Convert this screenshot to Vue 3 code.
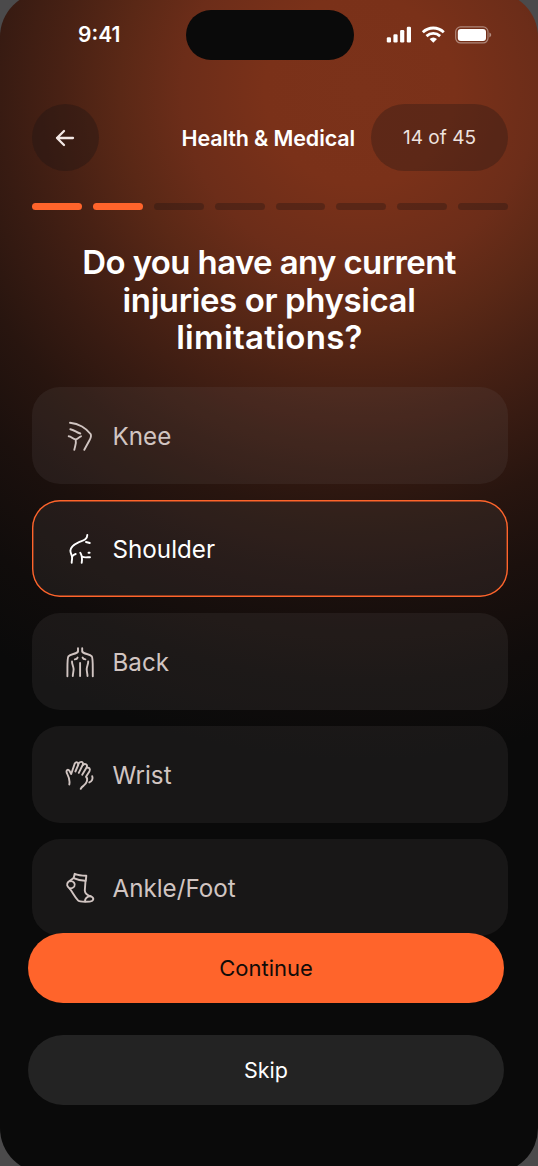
<script setup>
const steps = [true, true, false, false, false, false, false, false]

const options = [
  {
    label: 'Knee',
    icon: [
      'M6 3.8C11 4.3 15 5.8 18 7.5C21.5 9.5 24.5 12.3 26.6 15C27.6 17 26.8 19 25.5 21.3L20.3 30.8',
      'M6.3 10.2C10 10.7 12.5 13.5 16.3 14.5',
      'M4.7 17.2C7.5 17.2 8.5 20.2 11.7 20.4C14.5 20.5 14.3 18 17 17.3',
      'M11.7 20.8C12.6 24.5 10.8 27.5 10.3 30.8',
    ],
  },
  {
    label: 'Shoulder',
    selected: true,
    icon: [
      'M23.3 2.9C23.2 8 18.5 8.5 14.5 10.3C11 12 6.7 14.8 6.4 18.5C6.3 21 7.8 22.5 8.1 25C8.3 27.2 7.6 29 7.7 30.8',
      'M8 24.7C9 23 10.2 22.4 11.7 22',
      'M16.3 20.7C17.8 22.8 18.4 26 17.7 30.8',
      'M18 24.7C20.5 26 23.5 25.2 26 25.2',
      'M22 10L25.8 11',
      'M24.5 20.7H25.6',
    ],
  },
  {
    label: 'Back',
    icon: [
      'M14 3.2V6.5C12.7 9.5 6.7 8.5 4.4 11.3C3.2 13 3.5 17 3.4 31.2',
      'M18.2 3.2V6.5C19.5 9.5 25.5 8.5 27.8 11.3C29 13 28.7 17 28.8 31.2',
      'M8 16.5C7.8 19 9.6 21.5 9.6 24C9.6 27 8.8 28.5 8.8 31',
      'M24.2 16.5C24.4 19 22.7 21.5 22.7 24C22.7 27 23.5 28.5 23.5 31',
      'M10.8 14.4C12.4 14.3 13.2 13.7 13.6 12.6',
      'M21.4 14.4C19.8 14.3 19 13.7 18.6 12.6',
      'M16.1 18V31',
    ],
  },
  {
    label: 'Wrist',
    icon: [
      'M5.3 26.5C6.4 21.5 4.6 18.5 2.8 15C1.8 12.3 4.1 10.5 5.4 12.8L7.2 16L10.5 6.2C11.6 3.2 15 4 14.2 7L11.4 13.5',
      'M14.2 6.2C15.8 2.8 19.4 3.2 18.9 6.5L14.8 14.8',
      'M18.9 7C21 4.8 23.9 6.4 22.7 9.3L18.2 16.8',
      'M22.8 9.8C25.2 9 26.6 11 25.5 13.2L22 18.8C24.5 21 22.6 25.4 19.7 27.6C18.2 28.6 17.2 29.5 16.7 30.8',
      'M28.2 18.2C29.2 20.8 28 23.4 25.3 24.4',
    ],
  },
  {
    label: 'Ankle/Foot',
    icon: [
      'M10.7 2.8C14.5 4.4 18.5 4.7 22.3 4.8L21.8 9.7C17.5 9.8 13.5 9 9.6 7.2Z',
      'M8.9 7.5L4.2 11C2 13.3 3.3 15.6 5.3 17.2C8.5 20.8 10.5 26 14 29.4C15.6 31.2 21 30.9 25.8 30.6C30 30 30.3 27 27.3 25.5C23.5 24.5 21 22.8 20.8 19.5L21.5 10',
      'M6 10.2C9.3 9.5 12 13 10.3 15.5C9.2 17 7.4 17.5 5.8 17.5',
      'M21 30.3C20.8 27.4 23.3 25.4 26.5 25.3',
    ],
  },
]
</script>

<template>
  <div class="device">
    <div class="backdrop"></div>
    <main class="screen">
      <header class="status">
        <span class="time">9:41</span>
        <span class="island"></span>
        <svg class="signals" width="106" height="20" viewBox="0 0 106 20">
          <g fill="#fff">
            <rect x="0.8" y="12.2" width="4.2" height="5.3" rx="1.2" />
            <rect x="7.4" y="9.2" width="4.2" height="8.3" rx="1.2" />
            <rect x="14.1" y="5" width="4.2" height="12.5" rx="1.2" />
            <rect x="20.8" y="1.8" width="4.2" height="15.7" rx="1.2" />
          </g>
          <g fill="none" stroke="#fff" stroke-width="2.8">
            <path d="M36.8 7.2C42.8 1.6 51.8 1.6 57.8 7.2" />
            <path d="M40.5 11.1C44.5 7.4 50.1 7.4 54.1 11.1" />
          </g>
          <path d="M43.6 13.9C45.9 11.9 48.7 11.9 51 13.9L47.3 17.8Z" fill="#fff" />
          <rect x="69.7" y="1.9" width="32.3" height="16" rx="4.8" fill="none" stroke="#fff" stroke-opacity=".42" stroke-width="1.2" />
          <rect x="71.8" y="4" width="28.2" height="11.9" rx="3" fill="#fff" />
          <path d="M103.4 7.6C105.8 8.5 105.8 11.5 103.4 12.4Z" fill="#fff" opacity=".45" />
        </svg>
      </header>

      <nav class="nav">
        <button class="back" aria-label="Back">
          <svg width="20" height="18" viewBox="0 0 20 18">
            <path d="M18 9H2M9 2L2 9L9 16" />
          </svg>
        </button>
        <h2 class="section">Health &amp; Medical</h2>
        <span class="count">14 of 45</span>
      </nav>

      <div class="steps">
        <i v-for="(done, i) in steps" :key="i" class="step" :class="{ done }"></i>
      </div>

      <h1 class="question">
        <span class="line first">Do you have any current</span>
        <span class="line second">injuries or physical</span>
        <span class="line third">limitations?</span>
      </h1>

      <ul class="options">
        <li v-for="item in options" :key="item.label" class="option" :class="{ selected: item.selected }">
          <svg class="icon" width="32" height="34" viewBox="0 0 32 34">
            <path v-for="(d, i) in item.icon" :key="i" :d="d" />
          </svg>
          <span class="label">{{ item.label }}</span>
        </li>
      </ul>

      <footer class="actions">
        <button class="action primary">Continue</button>
        <button class="action">Skip</button>
      </footer>
    </main>
  </div>
</template>

<style>
html,
body {
  margin: 0;
  background: #4b4a4b;
}
</style>

<style scoped>
.device {
  position: relative;
  width: 538px;
  height: 1166px;
  overflow: hidden;
  color: #fff;
  font-family: Inter, 'Liberation Sans', sans-serif;
}
.backdrop {
  position: absolute;
  inset: -8px 0 -7px;
  border-radius: 45px;
  background: radial-gradient(
      circle at 360px 98px,
      #7b321a 0,
      #7a3119 95px,
      #6c2d19 178px,
      #5a2816 240px,
      #482114 300px,
      #381b12 360px,
      #28150f 425px,
      #1b100d 500px,
      #100c0b 590px,
      #0a0a0a 670px
    )
    #0a0a0a;
}
.screen {
  position: relative;
  height: 100%;
  box-sizing: border-box;
  padding-top: 10px;
}
button {
  border: 0;
  padding: 0;
  color: inherit;
  font: inherit;
}
.status {
  display: flex;
  align-items: center;
  height: 50px;
}
.time {
  width: 108px;
  padding: 0 0 1px 78px;
  font-size: 21px;
  font-weight: 600;
}
.island {
  width: 168px;
  height: 50px;
  border-radius: 25px;
  background: #0a0a0a;
}
.signals {
  margin-left: 32px;
}
.nav {
  display: grid;
  grid-template-columns: 67px 1fr 137px;
  align-items: center;
  height: 67px;
  margin: 44px 30px 0 32px;
}
.back {
  display: grid;
  place-items: center;
  width: 67px;
  height: 67px;
  border-radius: 50%;
  background: rgba(28, 20, 20, 0.36);
}
.back svg {
  margin-right: 2px;
}
.back path {
  fill: none;
  stroke: #f3e8e5;
  stroke-width: 2.3;
  stroke-linecap: round;
  stroke-linejoin: round;
}
.section {
  margin: 0 16px 0 0;
  text-align: right;
  font-size: 21.5px;
  font-weight: 600;
  letter-spacing: -0.12px;
  white-space: nowrap;
}
.count {
  display: grid;
  place-items: center;
  height: 67px;
  border-radius: 34px;
  background: rgba(28, 20, 20, 0.3);
  color: #eee2df;
  font-size: 19px;
}
.steps {
  display: grid;
  grid-template-columns: repeat(8, 1fr);
  gap: 11px;
  margin: 32px 30px 0 32px;
}
.step {
  height: 7px;
  border-radius: 3.5px;
  background: rgba(28, 20, 20, 0.32);
}
.step.done {
  background: #ff642b;
}
.question {
  margin: 34px 0 0;
  text-align: center;
  font-size: 33px;
  line-height: 37.5px;
  font-weight: 600;
}
.line {
  display: block;
}
.first {
  letter-spacing: -0.62px;
}
.second {
  letter-spacing: -0.4px;
}
.third {
  padding-left: 1px;
  letter-spacing: 0.3px;
}
.options {
  display: grid;
  gap: 16px;
  margin: 30px 30px 0 32px;
  padding: 0;
  list-style: none;
}
.option {
  display: flex;
  align-items: center;
  gap: 16.5px;
  box-sizing: border-box;
  height: 97px;
  padding-left: 32px;
  border-radius: 28px;
  background: rgba(110, 106, 106, 0.14);
  color: #d1c5c2;
  font-size: 24.2px;
}
.option.selected {
  box-shadow: inset 0 0 0 1.4px #ff642b;
  color: #fff;
}
.label {
  padding-top: 2px;
}
.icon {
  margin-top: 1px;
  fill: none;
  stroke: currentColor;
  stroke-width: 1.9;
  stroke-linecap: round;
  stroke-linejoin: round;
}
.actions {
  position: absolute;
  left: 28px;
  right: 34px;
  top: 933px;
  display: grid;
  gap: 32px;
}
.action {
  height: 70px;
  border-radius: 35px;
  background: #232323;
  font-size: 21.5px;
}
.action.primary {
  background: #ff642b;
  color: #120b08;
  font-size: 22px;
}
</style>
